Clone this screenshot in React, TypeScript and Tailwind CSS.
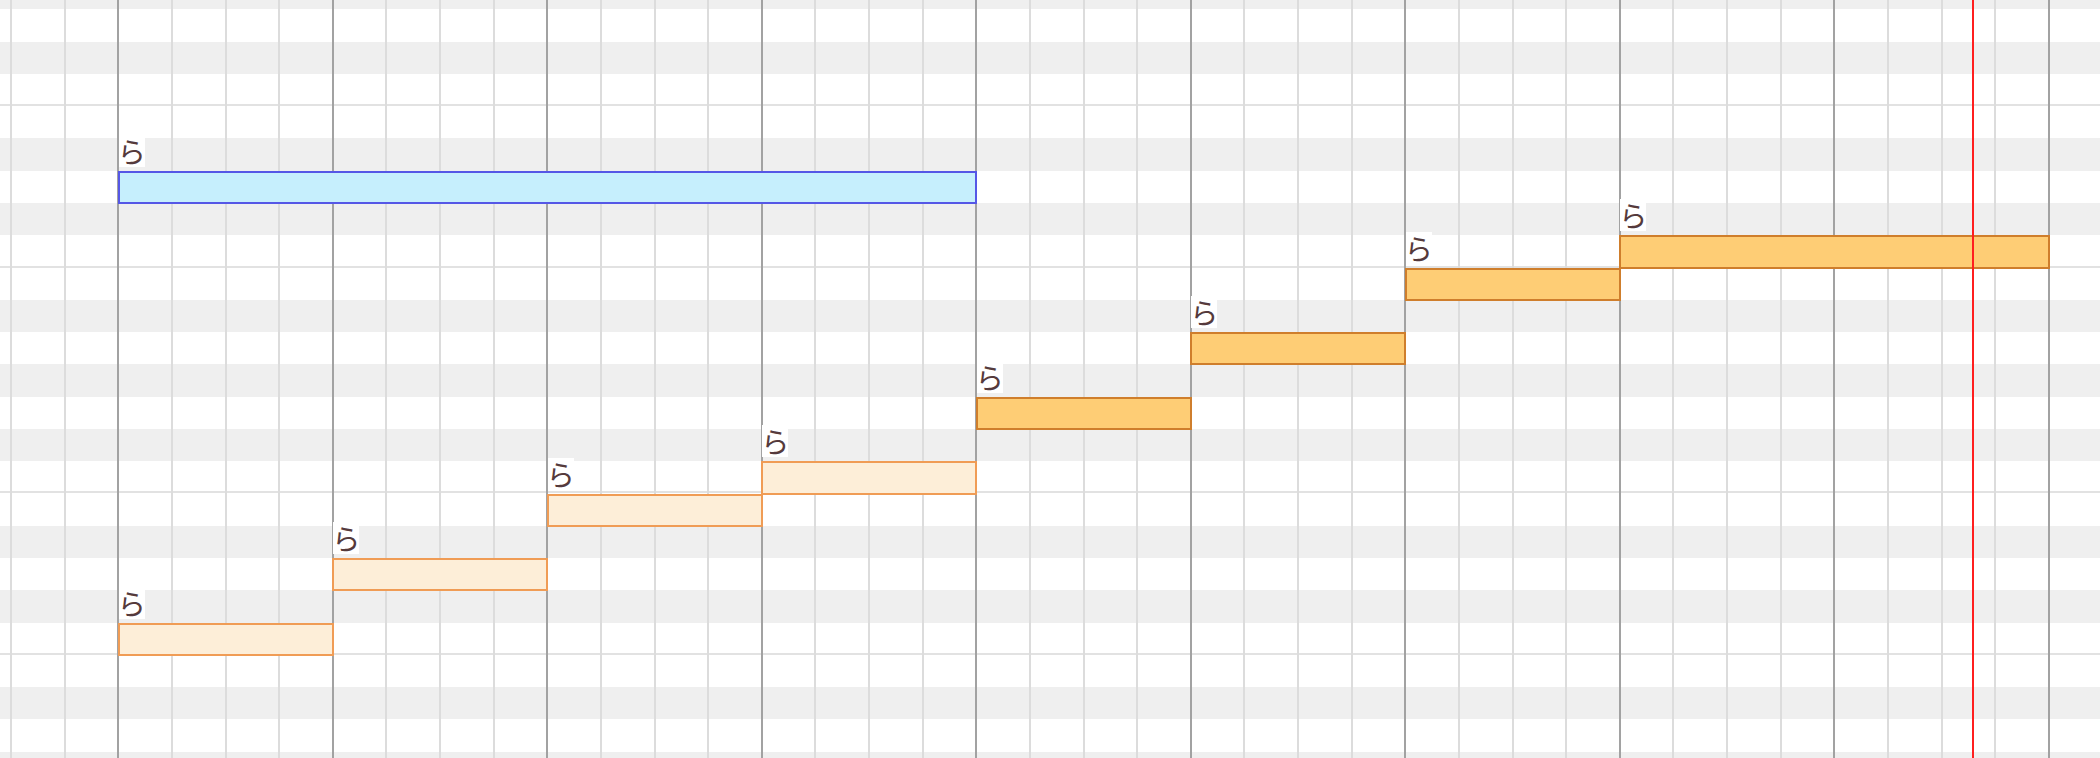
import React from "react";

const ROW = 32.29;
const BEAT = 214.52;
const ROW0 = -23.04;
const X0 = 117.64;

const grayRows = new Set([0, 2, 5, 7, 10, 12, 14, 17, 19, 22, 24]);
const lineRows = new Set([3, 8, 15, 20]);

type Note = { a: number; b: number; row: number; kind: "blue" | "light" | "dark" };

const notes: Note[] = [
  { a: 0, b: 4, row: 6, kind: "blue" },
  { a: 0, b: 1, row: 20, kind: "light" },
  { a: 1, b: 2, row: 18, kind: "light" },
  { a: 2, b: 3, row: 16, kind: "light" },
  { a: 3, b: 4, row: 15, kind: "light" },
  { a: 4, b: 5, row: 13, kind: "dark" },
  { a: 5, b: 6, row: 11, kind: "dark" },
  { a: 6, b: 7, row: 9, kind: "dark" },
  { a: 7, b: 9, row: 8, kind: "dark" },
];

const kindClass: Record<Note["kind"], string> = {
  blue: "bg-[#c6effd] border-2 border-[#5557e6]",
  light: "bg-[#fdeed8] border-2 border-[#f09c55]",
  dark: "bg-[#fecd75] border-2 border-[#cf7e2c]",
};

export default function App() {
  const rows = Array.from({ length: 26 }, (_, i) => i);
  const cols = Array.from({ length: 42 }, (_, i) => i);
  return (
    <div className="relative w-[2100px] h-[758px] overflow-hidden bg-white">
      {/* key rows */}
      <div className="flex flex-col -mt-[23.04px]">
        {rows.map((r) => (
          <div
            key={r}
            className={
              (grayRows.has(r) ? "bg-[#efefef] " : "bg-white ") +
              (lineRows.has(r) ? "border-b-2 border-[#e2e2e2] " : "") +
              "h-[32.29px] shrink-0 w-full"
            }
          />
        ))}
      </div>

      {/* vertical grid lines */}
      <div className="absolute inset-y-0 left-[-43.59px] flex">
        {cols.map((c) => (
          <div
            key={c}
            className={
              (c % 4 === 3 ? "border-[#a2a2a2] " : "border-[#dcdcdc] ") +
              "w-[53.63px] shrink-0 h-full border-l-2"
            }
          />
        ))}
      </div>

      {/* notes */}
      {notes.map((n, i) => {
        const left = X0 + BEAT * n.a;
        const top = ROW0 + ROW * n.row;
        const width = BEAT * (n.b - n.a) + 1.5;
        return (
          <React.Fragment key={i}>
            <div
              className={"absolute " + kindClass[n.kind]}
              style={{ left, top, width, height: ROW + 1 }}
            />
            <div
              className="absolute bg-white w-[26px] h-[32px] flex items-center justify-center text-[28px] leading-[32px] text-[#553a3c]"
              style={{
                left: left + 1,
                top: top - 36,
                fontFamily: '"Noto Sans CJK JP", "Noto Sans", sans-serif',
              }}
            >
              ら
            </div>
          </React.Fragment>
        );
      })}

      {/* playhead */}
      <div className="absolute top-0 bottom-0 left-[1972px] w-[2px] bg-[#ff1f1f]" />
    </div>
  );
}
